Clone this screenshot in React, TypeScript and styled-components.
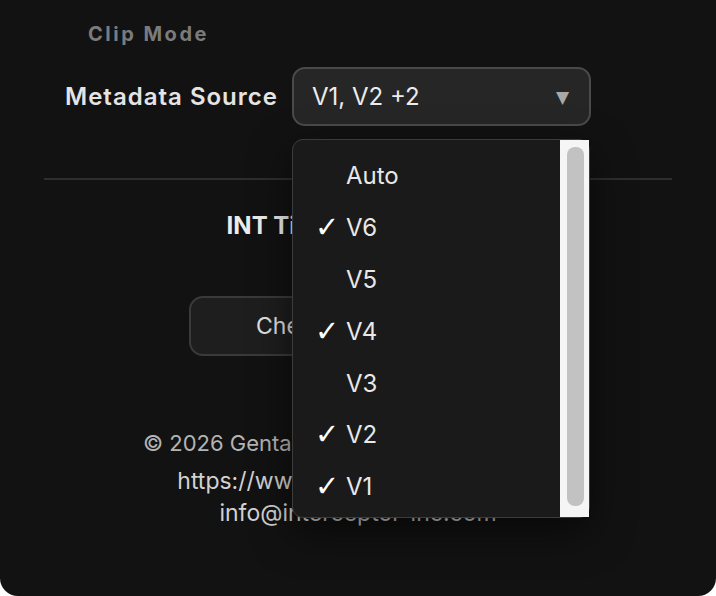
import styled, { createGlobalStyle } from 'styled-components';

const GlobalStyle = createGlobalStyle`
   html, body {
      margin: 0;
      padding: 0;
      background: #ffffff;
   }
   body {
      font-family: Inter, "Noto Sans", "Liberation Sans", sans-serif;
   }
`;

const items = [
   { label: 'Auto', checked: false },
   { label: 'V6', checked: true },
   { label: 'V5', checked: false },
   { label: 'V4', checked: true },
   { label: 'V3', checked: false },
   { label: 'V2', checked: true },
   { label: 'V1', checked: true },
];

const App = () => {
   return (
      <>
         <GlobalStyle />
         <Window>
            <SectionTitle>Clip Mode</SectionTitle>

            <FieldRow>
               <FieldLabel>Metadata Source</FieldLabel>
               <SelectWrap>
                  <SelectButton>
                     <span>V1, V2 +2</span>
                     <Caret>▼</Caret>
                  </SelectButton>

                  <Menu>
                     <MenuList>
                        {items.map(item => (
                           <MenuItem key={item.label}>
                              <Check>{item.checked ? '✓' : ''}</Check>
                              <span>{item.label}</span>
                           </MenuItem>
                        ))}
                     </MenuList>
                     <ScrollTrack>
                        <ScrollThumb />
                     </ScrollTrack>
                  </Menu>
               </SelectWrap>
            </FieldRow>

            <Divider />

            <About>
               <AppName>INT Timecode Toolbox</AppName>
               <UpdateButton>Check for Updates</UpdateButton>
               <StatusLine>Latest: v1.8.0</StatusLine>
               <Copyright>© 2026 Gentaro Interceptor Incorporated</Copyright>
               <LinkLine $gap={10}>https://www.interceptor-inc.com/</LinkLine>
               <LinkLine $gap={3}>info@interceptor-inc.com</LinkLine>
            </About>
         </Window>
      </>
   );
};

export default App;

const Window = styled.div`
   position: relative;
   width: 716px;
   height: 596px;
   background: #121212;
   border-radius: 0 0 18px 18px;
   overflow: hidden;
   box-sizing: border-box;
   padding-top: 20px;
`;

const SectionTitle = styled.div`
   padding-left: 88px;
   font-size: 20px;
   font-weight: 700;
   letter-spacing: 2.5px;
   line-height: 28px;
   color: #7b7b7b;
`;

const FieldRow = styled.div`
   display: flex;
   align-items: center;
   gap: 14px;
   margin-top: 19px;
   padding-left: 65px;
`;

const FieldLabel = styled.div`
   font-size: 24px;
   font-weight: 600;
   letter-spacing: 1px;
   color: #e4e4e4;
`;

const SelectWrap = styled.div`
   position: relative;
`;

const SelectButton = styled.div`
   display: flex;
   align-items: center;
   justify-content: space-between;
   box-sizing: border-box;
   width: 299px;
   height: 59px;
   padding: 0 20px 0 18px;
   background: #262626;
   border: 2px solid #4a4a4a;
   border-radius: 13px;
   font-size: 24px;
   color: #ececec;
`;

const Caret = styled.span`
   font-size: 17px;
   color: #a8a8a8;
   font-family: "DejaVu Sans", sans-serif;
`;

const Menu = styled.div`
   position: absolute;
   top: 72px;
   left: 0;
   z-index: 10;
   display: flex;
   box-sizing: border-box;
   width: 298px;
   height: 379px;
   background: #1a1a1a;
   border: 1px solid #3c3c3c;
   border-radius: 11px;
   box-shadow: 0 14px 40px rgba(0, 0, 0, 0.55);
`;

const MenuList = styled.div`
   flex: 1;
   padding-top: 10px;
`;

const MenuItem = styled.div`
   display: flex;
   align-items: center;
   height: 51.8px;
   padding-left: 22px;
   font-size: 24px;
   color: #e8e8e8;
`;

const Check = styled.span`
   width: 31px;
   font-family: "DejaVu Sans", sans-serif;
   font-size: 29px;
   font-weight: 700;
   line-height: 1;
   color: #ffffff;
`;

const ScrollTrack = styled.div`
   display: flex;
   box-sizing: border-box;
   width: 29px;
   padding: 7px 5px 11px 7px;
   background: #f5f5f5;
`;

const ScrollThumb = styled.div`
   flex: 1;
   background: #c2c2c2;
   border-radius: 8px;
`;

const Divider = styled.div`
   height: 2px;
   margin: 52px 44px 0;
   background: #2e2e2e;
`;

const About = styled.div`
   display: flex;
   flex-direction: column;
   align-items: center;
   padding-top: 30px;
`;

const AppName = styled.div`
   font-size: 24px;
   font-weight: 700;
   line-height: 32px;
   color: #ececec;
`;

const UpdateButton = styled.div`
   display: flex;
   align-items: center;
   justify-content: center;
   box-sizing: border-box;
   width: 339px;
   height: 60px;
   margin-top: 54px;
   background: #1e1e1e;
   border: 2px solid #3a3a3a;
   border-radius: 14px;
   font-size: 23px;
   color: #e2e2e2;
`;

const StatusLine = styled.div`
   margin-top: 15px;
   font-size: 20px;
   line-height: 26px;
   color: #9a9a9a;
`;

const Copyright = styled.div`
   margin-top: 32px;
   font-size: 22px;
   line-height: 28px;
   color: #b4b4b4;
`;

const LinkLine = styled.div<{ $gap: number }>`
   margin-top: ${p => p.$gap}px;
   font-size: 23px;
   line-height: 29px;
   color: #d2d2d2;
`;
